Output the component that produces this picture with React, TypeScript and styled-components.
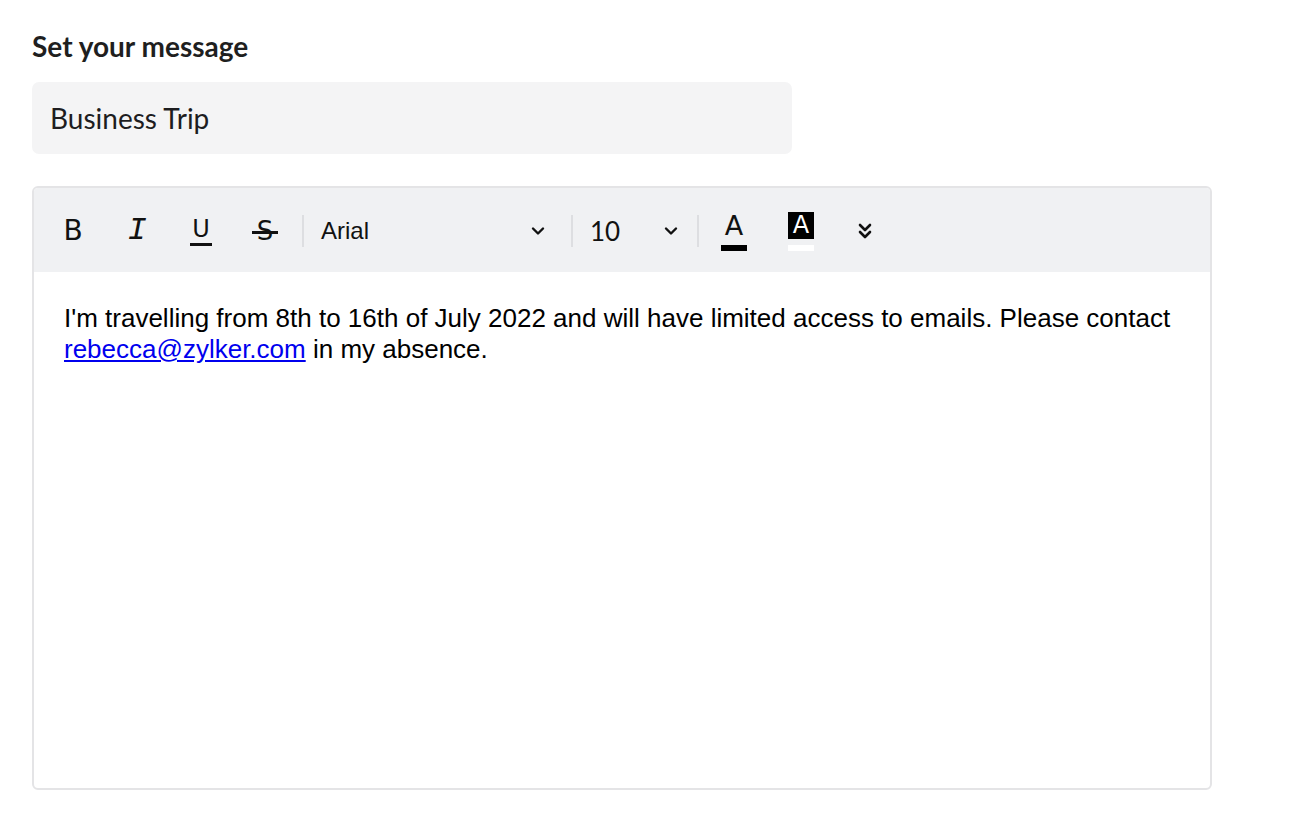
import { createGlobalStyle } from 'styled-components';
import styled from 'styled-components';

const GlobalStyle = createGlobalStyle`
  body {
    margin: 0;
    background: #ffffff;
    font-family: Lato, "Noto Sans", sans-serif;
  }
`;

const Page = styled.div`
  padding: 29px 32px;
  width: 1180px;
`;

const Heading = styled.h2`
  margin: 0 0 19px;
  font-size: 28px;
  font-weight: 700;
  color: #1f1f1f;
  line-height: 34px;
`;

const SubjectInput = styled.div`
  width: 760px;
  height: 72px;
  box-sizing: border-box;
  background: #f4f4f5;
  border-radius: 7px;
  padding: 0 18px;
  display: flex;
  align-items: center;
  font-size: 28px;
  color: #1d1d1f;
`;

const Editor = styled.div`
  margin-top: 32px;
  width: 1180px;
  height: 604px;
  box-sizing: border-box;
  border: 2px solid #e4e4e6;
  border-radius: 6px;
  display: flex;
  flex-direction: column;
  overflow: hidden;
`;

const Toolbar = styled.div`
  height: 84px;
  background: #f0f1f3;
  display: flex;
  align-items: center;
  padding: 2px 0 0 7px;
  box-sizing: border-box;
  flex-shrink: 0;
`;

const ToolButton = styled.div<{ $w?: number }>`
  width: ${(p) => p.$w ?? 64}px;
  height: 48px;
  display: flex;
  flex-direction: column;
  align-items: center;
  justify-content: center;
  color: #111;
  flex-shrink: 0;
`;

const Glyph = styled.span<{ $font?: string; $size?: number; $italic?: boolean }>`
  font-family: ${(p) => p.$font ?? '"DejaVu Sans", sans-serif'};
  font-size: ${(p) => p.$size ?? 28}px;
  font-style: ${(p) => (p.$italic ? 'italic' : 'normal')};
  line-height: 1;
  color: #111;
  position: relative;
`;

const UnderGlyph = styled(Glyph)`
  padding: 0 2px 2px;
  border-bottom: 3px solid #111;
  font-size: 24px;
`;

const StrikeGlyph = styled(Glyph)`
  font-size: 26px;
  &::after {
    content: '';
    position: absolute;
    left: -5px;
    right: -5px;
    top: 50%;
    height: 2.5px;
    background: #111;
  }
`;

const ColorBar = styled.div<{ $color: string }>`
  width: 26px;
  height: 6px;
  background: ${(p) => p.$color};
  margin-top: 6px;
`;

const HighlightBox = styled.div`
  width: 26px;
  height: 27px;
  background: #000;
  color: #fff;
  display: flex;
  align-items: center;
  justify-content: center;
  font-family: "DejaVu Sans", sans-serif;
  font-size: 24px;
  line-height: 1;
`;

const Sep = styled.div<{ $ml?: number }>`
  width: 2px;
  height: 32px;
  background: #dddee1;
  margin-left: ${(p) => p.$ml ?? 0}px;
  flex-shrink: 0;
`;

const Select = styled.div<{ $w: number; $pr: number }>`
  width: ${(p) => p.$w}px;
  display: flex;
  align-items: center;
  justify-content: space-between;
  padding: 0 ${(p) => p.$pr}px 0 17px;
  box-sizing: border-box;
  font-family: "Liberation Sans", Arial, sans-serif;
  font-size: 24px;
  color: #111;
  flex-shrink: 0;
`;

const SizeText = styled.span`
  font-family: Lato, sans-serif;
  font-size: 26px;
`;

const Body = styled.div`
  padding: 31px 30px;
  font-family: "Liberation Sans", Arial, sans-serif;
  font-size: 26px;
  line-height: 31px;
  color: #000;
  a {
    color: #0000ee;
    text-decoration: underline;
  }
`;

const Chevron = () => (
  <svg width="16" height="10" viewBox="0 0 16 10">
    <path d="M3 2.5l5 5 5-5" fill="none" stroke="#111" strokeWidth="2.4" strokeLinecap="round" strokeLinejoin="round" />
  </svg>
);

export default function App() {
  return (
    <>
      <GlobalStyle />
      <Page>
        <Heading>Set your message</Heading>
        <SubjectInput>Business Trip</SubjectInput>
        <Editor>
          <Toolbar>
            <ToolButton>
              <Glyph $size={28}>B</Glyph>
            </ToolButton>
            <ToolButton>
              <Glyph $font={'"Liberation Mono", monospace'} $size={32} $italic>I</Glyph>
            </ToolButton>
            <ToolButton>
              <UnderGlyph>U</UnderGlyph>
            </ToolButton>
            <ToolButton>
              <StrikeGlyph>S</StrikeGlyph>
            </ToolButton>
            <Sep $ml={5} />
            <Select $w={267} $pr={25}>
              <span>Arial</span>
              <Chevron />
            </Select>
            <Sep />
            <Select $w={124} $pr={18}>
              <SizeText>10</SizeText>
              <Chevron />
            </Select>
            <Sep />
            <ToolButton $w={70}>
              <Glyph $size={27}>A</Glyph>
              <ColorBar $color="#000" />
            </ToolButton>
            <ToolButton>
              <HighlightBox>A</HighlightBox>
              <ColorBar $color="#fff" />
            </ToolButton>
            <ToolButton>
              <svg width="18" height="20" viewBox="0 0 18 20">
                <path d="M4 4l5 5 5-5M4 11l5 5 5-5" fill="none" stroke="#111" strokeWidth="2.6" strokeLinecap="round" strokeLinejoin="round" />
              </svg>
            </ToolButton>
          </Toolbar>
          <Body>
            I'm travelling from 8th to 16th of July 2022 and will have limited access to emails. Please contact{' '}
            <a href="#">rebecca@zylker.com</a> in my absence.
          </Body>
        </Editor>
      </Page>
    </>
  );
}
